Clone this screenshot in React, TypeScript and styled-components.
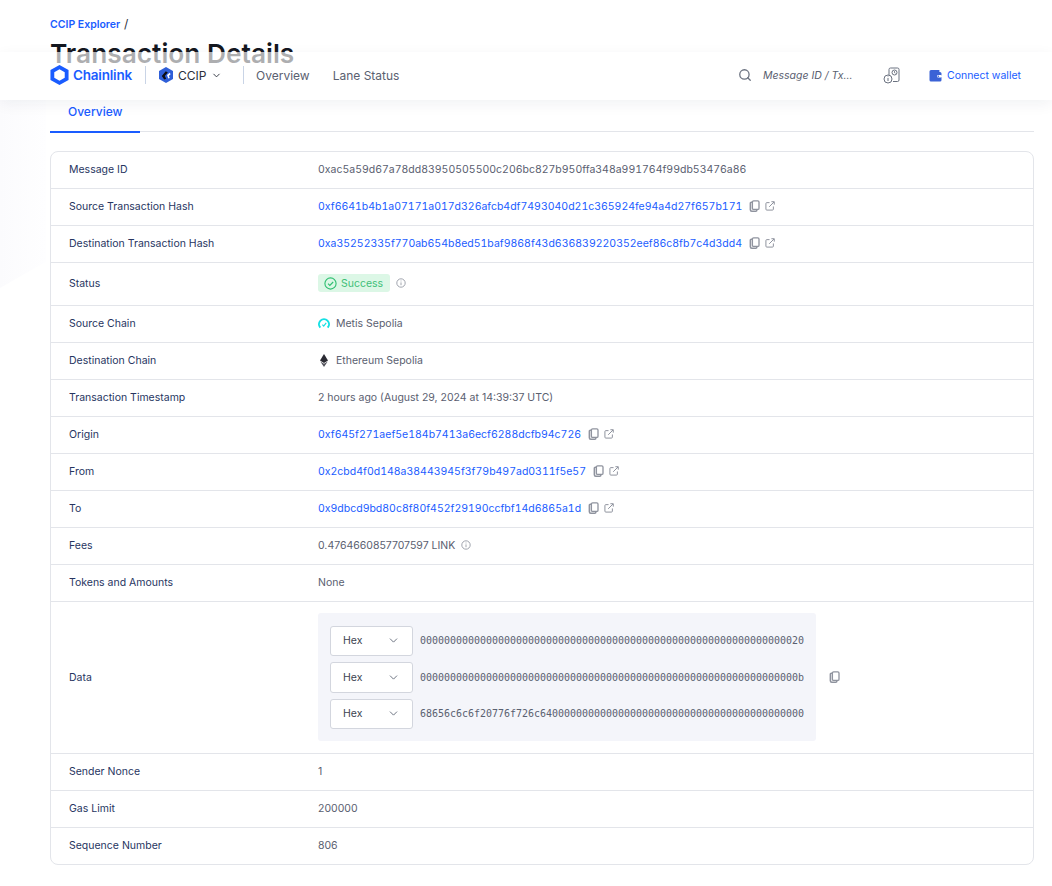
import React from 'react';
import styled, { createGlobalStyle } from 'styled-components';
import { ChevronDown, Search } from 'lucide-react';

const GlobalStyle = createGlobalStyle`
	html, body {
		margin: 0;
		padding: 0;
		background: #fff;
		font-family: Inter, "Liberation Sans", sans-serif;
	}
	* { box-sizing: border-box; }
`;

const CopyIcon = () => (
	<svg width="11" height="12" viewBox="0 0 11 12" fill="none" stroke="#8f939e" strokeWidth="1.3">
		<rect x="3.4" y="0.8" width="6.6" height="8.6" rx="1.2" />
		<path d="M3.4 2.2H2.4a1 1 0 0 0-1 1v6.6a1.4 1.4 0 0 0 1.4 1.4h4a1 1 0 0 0 1-1v-.6" strokeWidth="1.6" />
	</svg>
);

const ExternalIcon = () => (
	<svg width="10" height="10" viewBox="0 0 11 11" fill="none" stroke="#8f939e" strokeWidth="1.1">
		<path d="M5 1.8H2a1 1 0 0 0-1 1V9a1 1 0 0 0 1 1h6.2a1 1 0 0 0 1-1V6" />
		<path d="M4.6 6.4 10 1M7 .8h3.2V4" />
	</svg>
);

const InfoIcon = () => (
	<svg width="10" height="10" viewBox="0 0 10 10" fill="none" stroke="#8a8f9b" strokeWidth="0.8">
		<circle cx="5" cy="5" r="4.2" />
		<path d="M5 4.4v2.8M5 2.6v.8" />
	</svg>
);

const Logo = () => (
	<svg width="19" height="20" viewBox="0 0 19 21">
		<path fill="#1a5cff" fillRule="evenodd" d="M9.5 0 19 5.3v10.4L9.5 21 0 15.7V5.3ZM9.5 4.4 4 7.5v6l5.5 3.1 5.5-3.1v-6Z" />
	</svg>
);

const CcipIcon = () => (
	<svg width="14" height="16" viewBox="0 0 14 16">
		<path fill="#2f5fd8" d="M7 0 14 4v8l-7 4-7-4V4Z" />
		<path fill="#0d0d12" d="M2.8 9 6.8 4.2l2 1.2-3 3.600 1.400 2.800-2 .8Z" />
		<path fill="#fff" d="M8 8l2.800-2.200.8 1.500L9.800 9l1 1.900-1.500.6Z" />
	</svg>
);

const WalletIcon = () => (
	<svg width="13" height="13" viewBox="0 0 13 13">
		<path fill="#3b62d6" d="M2 1h8.4v2H11a1.5 1.5 0 0 1 1.5 1.5V11a1.5 1.5 0 0 1-1.5 1.5H2A1.5 1.5 0 0 1 .5 11V2.5A1.5 1.5 0 0 1 2 1Z" />
		<rect x="8" y="6" width="5" height="2.6" rx="1.3" fill="#fff" />
		<circle cx="9.3" cy="7.3" r=".8" fill="#3b62d6" />
	</svg>
);

const HistoryIcon = () => (
	<svg width="18" height="17" viewBox="0 0 18 17" fill="none" stroke="#6b7280" strokeWidth="1">
		<path d="M6 8V2.5A1.5 1.5 0 0 1 7.5 1h7A1.5 1.5 0 0 1 16 2.5V13a1.5 1.5 0 0 1-1.5 1.5H10" />
		<circle cx="11.5" cy="5.5" r="2.5" />
		<path d="M11.5 4.2v1.4l.9.6" />
		<circle cx="5" cy="12" r="4" />
		<path d="M5 11v3M5 9.5v.6" />
	</svg>
);

const SuccessIcon = () => (
	<svg width="13" height="13" viewBox="0 0 13 13" fill="none" stroke="#2fbf71" strokeWidth="1.1">
		<circle cx="6.5" cy="6.5" r="5.6" />
		<path d="m4 6.7 1.8 1.8L9.2 5" />
	</svg>
);

const MetisIcon = () => (
	<svg width="12" height="12" viewBox="0 0 12 12" fill="none" stroke="#14e0e4" strokeWidth="2">
		<path d="M2.3 10.600a5 5 0 1 1 7.400 0" />
		<path d="M4.400 7.700l1.300 1.400 2.500-3.200" strokeWidth="1.2" />
	</svg>
);

const EthIcon = () => (
	<svg width="12" height="13" viewBox="-1.5 0 12 13">
		<path fill="#2b2b33" d="M4.5 0 8.500 6.500 4.500 9 .5 6.500Z" />
		<path fill="#55555e" d="M4.500 9.800 8.200 7.500 4.500 13 .8 7.500Z" />
	</svg>
);

const hexLines = [
	'0000000000000000000000000000000000000000000000000000000000000020',
	'000000000000000000000000000000000000000000000000000000000000000b',
	'68656c6c6f20776f726c64000000000000000000000000000000000000000000',
];

const HashLink = ({ children }: { children: string }) => (
	<ValueRow>
		<BlueValue>{children}</BlueValue>
		<Actions>
			<CopyIcon />
			<ExternalIcon />
		</Actions>
	</ValueRow>
);

export default function App() {
	return (
		<Page>
			<GlobalStyle />
			<SideShade />
			<Nav>
				<Brand>
					<Logo />
					<BrandName>Chainlink</BrandName>
				</Brand>
				<Divider />
				<Product>
					<CcipIcon />
					<span>CCIP</span>
					<ChevronDown size={11} strokeWidth={2} />
				</Product>
				<Divider />
				<NavLinks>
					<NavLink>Overview</NavLink>
					<NavLink>Lane Status</NavLink>
				</NavLinks>
				<NavRight>
					<SearchBox>
						<Search size={14} color="#6b7280" strokeWidth={2.2} />
						<SearchText>Message ID / Tx...</SearchText>
					</SearchBox>
					<HistoryIcon />
					<Connect>
						<WalletIcon />
						Connect wallet
					</Connect>
				</NavRight>
			</Nav>

			<Breadcrumb>
				<Crumb>CCIP Explorer</Crumb> <Slash>/</Slash>
			</Breadcrumb>
			<Title>Transaction Details</Title>
			<Tabs>
				<Tab>Overview</Tab>
			</Tabs>

			<Card>
				<Row>
					<Label>Message ID</Label>
					<HashValue>0xac5a59d67a78dd83950505500c206bc827b950ffa348a991764f99db53476a86</HashValue>
				</Row>
				<Row>
					<Label>Source Transaction Hash</Label>
					<HashLink>0xf6641b4b1a07171a017d326afcb4df7493040d21c365924fe94a4d27f657b171</HashLink>
				</Row>
				<Row>
					<Label>Destination Transaction Hash</Label>
					<HashLink>0xa35252335f770ab654b8ed51baf9868f43d636839220352eef86c8fb7c4d3dd4</HashLink>
				</Row>
				<Row $height={43}>
					<Label>Status</Label>
					<ValueRow>
						<Badge>
							<SuccessIcon />
							Success
						</Badge>
						<InfoIcon />
					</ValueRow>
				</Row>
				<Row>
					<Label>Source Chain</Label>
					<ChainRow>
						<MetisIcon />
						<Value>Metis Sepolia</Value>
					</ChainRow>
				</Row>
				<Row>
					<Label>Destination Chain</Label>
					<ChainRow>
						<EthIcon />
						<Value>Ethereum Sepolia</Value>
					</ChainRow>
				</Row>
				<Row>
					<Label>Transaction Timestamp</Label>
					<Value>2 hours ago (August 29, 2024 at 14:39:37 UTC)</Value>
				</Row>
				<Row>
					<Label>Origin</Label>
					<HashLink>0xf645f271aef5e184b7413a6ecf6288dcfb94c726</HashLink>
				</Row>
				<Row>
					<Label>From</Label>
					<HashLink>0x2cbd4f0d148a38443945f3f79b497ad0311f5e57</HashLink>
				</Row>
				<Row>
					<Label>To</Label>
					<HashLink>0x9dbcd9bd80c8f80f452f29190ccfbf14d6865a1d</HashLink>
				</Row>
				<Row>
					<Label>Fees</Label>
					<ValueRow>
						<Value>0.4764660857707597 LINK</Value>
						<InfoIcon />
					</ValueRow>
				</Row>
				<Row>
					<Label>Tokens and Amounts</Label>
					<Value>None</Value>
				</Row>
				<Row $height={152}>
					<DataLabel>Data</DataLabel>
					<DataWrap>
						<DataBox>
							{hexLines.map((line) => (
								<DataLine key={line}>
									<HexSelect>
										Hex
										<ChevronDown size={13} strokeWidth={1.8} color="#6b7280" />
									</HexSelect>
									<HexText>{line}</HexText>
								</DataLine>
							))}
						</DataBox>
						<CopyIcon />
					</DataWrap>
				</Row>
				<Row>
					<Label>Sender Nonce</Label>
					<Value>1</Value>
				</Row>
				<Row>
					<Label>Gas Limit</Label>
					<Value>200000</Value>
				</Row>
				<Row $last $height={36}>
					<Label>Sequence Number</Label>
					<Value>806</Value>
				</Row>
			</Card>
		</Page>
	);
}

const Page = styled.div`
	position: relative;
	width: 1052px;
	height: 886px;
	overflow: hidden;
	padding: 18px 18px 0 50px;
	background: #fff;
`;

const SideShade = styled.div`
	position: absolute;
	top: 100px;
	left: 0;
	width: 46px;
	height: 188px;
	background: linear-gradient(to right, #fbfbfd, #fefeff);
	clip-path: polygon(0 0, 100% 0, 100% 86%, 0 100%);
`;

const Nav = styled.nav`
	position: absolute;
	top: 52px;
	left: 0;
	right: 0;
	height: 48px;
	padding: 0 31px 2px 50px;
	display: flex;
	align-items: center;
	background: rgba(255, 255, 255, 0.65);
	box-shadow: 0 4px 14px rgba(20, 30, 60, 0.06);
	z-index: 2;
`;

const Brand = styled.div`
	display: flex;
	align-items: center;
	gap: 4px;
	width: 95px;
`;

const BrandName = styled.span`
	color: #1a5cff;
	font-size: 13.5px;
	font-weight: 600;
	letter-spacing: -0.2px;
`;

const Divider = styled.div`
	width: 1px;
	height: 18px;
	background: #c9d4e6;
`;

const Product = styled.div`
	width: 97px;
	padding-left: 13px;
	display: flex;
	align-items: center;
	gap: 5px;
	color: #2b303b;
	font-size: 12px;
`;

const NavLinks = styled.div`
	display: flex;
	gap: 23px;
	margin-left: 12px;
`;

const NavLink = styled.span`
	color: #5a6070;
	font-size: 12px;
`;

const NavRight = styled.div`
	margin-left: auto;
	display: flex;
	align-items: center;
`;

const SearchBox = styled.div`
	display: flex;
	align-items: center;
	gap: 11px;
	width: 145px;
`;

const SearchText = styled.span`
	color: #5a6070;
	font-size: 10.5px;
	font-style: italic;
`;

const Connect = styled.div`
	display: flex;
	align-items: center;
	gap: 5px;
	margin-left: 28px;
	color: #1a5cff;
	font-size: 10.5px;
`;

const Breadcrumb = styled.div`
	height: 14px;
	font-size: 10.5px;
	line-height: 14px;
`;

const Crumb = styled.span`
	color: #1a5cff;
	font-weight: 600;
`;

const Slash = styled.span`
	margin-left: 1px;
	color: #2b303b;
	font-size: 12px;
	line-height: 1;
`;

const Title = styled.h1`
	margin: 6px 0 0;
	height: 32px;
	color: #14171f;
	font-size: 26.3px;
	line-height: 32px;
	font-weight: 600;
`;

const Tabs = styled.div`
	height: 52px;
	margin-top: 10px;
	border-bottom: 1px solid #e3e5ea;
`;

const Tab = styled.div`
	width: 90px;
	height: 53px;
	padding: 24px 0 0 18px;
	color: #1a5cff;
	font-size: 12px;
	font-weight: 500;
	border-bottom: 2px solid #1a5cff;
`;

const Card = styled.section`
	position: relative;
	margin-top: 19px;
	border: 1px solid #e3e5ea;
	border-radius: 8px;
`;

const Row = styled.div<{ $height?: number; $last?: boolean }>`
	height: ${(p) => p.$height ?? 37}px;
	display: grid;
	grid-template-columns: 249px 1fr;
	align-items: center;
	padding: 0 0 2px 18px;
	border-bottom: ${(p) => (p.$last ? 'none' : '1px solid #e3e5ea')};
`;

const Label = styled.div`
	color: #27355f;
	font-size: 10.5px;
`;

const DataLabel = styled(Label)`
	margin-top: 2px;
`;

const Value = styled.span`
	color: #5a6070;
	font-size: 10.5px;
`;

const HashValue = styled(Value)`
	font-variant-numeric: tabular-nums;
`;

const BlueValue = styled(HashValue)`
	color: #1a5cff;
`;

const ValueRow = styled.div`
	display: flex;
	align-items: center;
	gap: 6px;
`;

const Actions = styled.div`
	display: flex;
	align-items: center;
	gap: 5px;
	margin-left: 1px;
`;

const ChainRow = styled.div`
	display: flex;
	align-items: center;
	gap: 6px;
`;

const Badge = styled.div`
	width: 72px;
	height: 18px;
	padding: 0 6px;
	display: flex;
	align-items: center;
	gap: 4px;
	border-radius: 3px;
	background: #dcf7e6;
	color: #3fbf78;
	font-size: 10.5px;
`;

const DataWrap = styled.div`
	display: flex;
	align-items: center;
	gap: 13px;
`;

const DataBox = styled.div`
	width: 498px;
	height: 128px;
	padding: 13px 12px;
	display: flex;
	flex-direction: column;
	gap: 6px;
	background: #f4f5fa;
	border-radius: 3px;
`;

const DataLine = styled.div`
	display: flex;
	align-items: center;
	gap: 7px;
`;

const HexSelect = styled.div`
	width: 83px;
	height: 30px;
	padding: 0 12px;
	display: flex;
	flex: none;
	align-items: center;
	justify-content: space-between;
	background: #fff;
	border: 1px solid #d3d6de;
	border-radius: 3px;
	color: #3c4250;
	font-size: 10.5px;

	${DataLine}:nth-child(2) & {
		height: 31px;
	}
`;

const HexText = styled.span`
	color: #5a6070;
	font-family: "DejaVu Sans Mono", "Liberation Mono", monospace;
	font-size: 9.98px;
`;
